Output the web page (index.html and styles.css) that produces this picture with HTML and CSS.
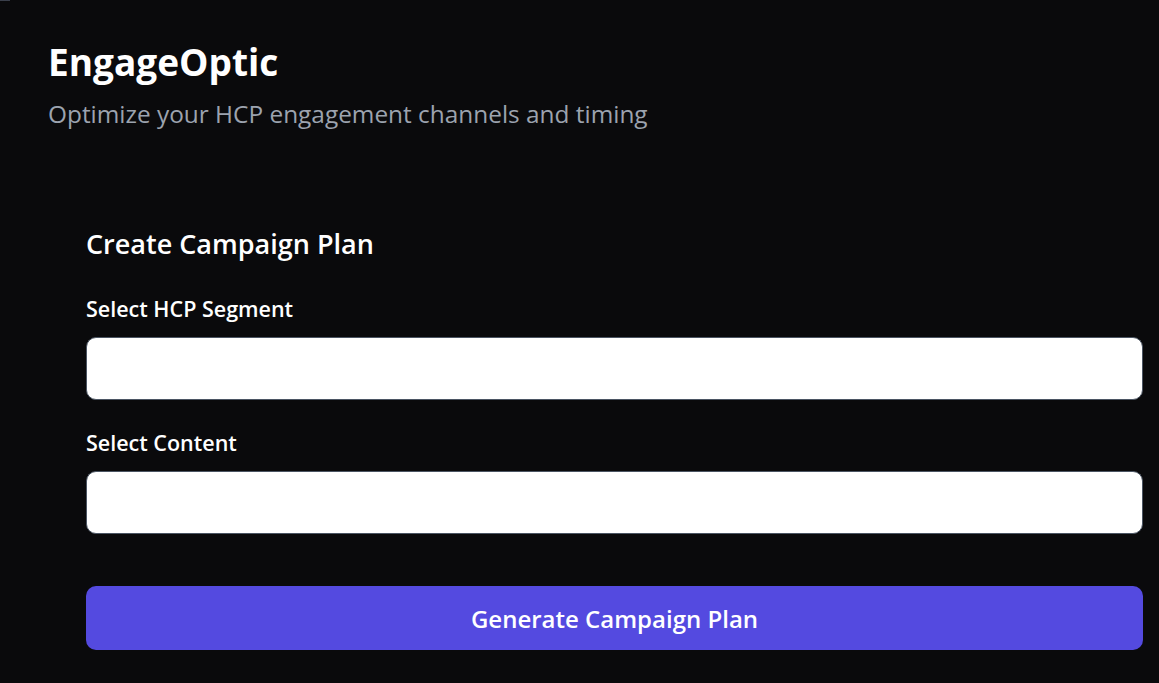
FILE: index.html
```html
<!DOCTYPE html>
<html lang="en">
<head>
<meta charset="utf-8">
<title>EngageOptic</title>
<link rel="stylesheet" href="styles.css">
</head>
<body>
<div class="corner"></div>
<main class="page">
  <header class="header">
    <h1 class="title">EngageOptic</h1>
    <p class="subtitle">Optimize your HCP engagement channels and timing</p>
  </header>
  <section class="card">
    <h2 class="card-title">Create Campaign Plan</h2>
    <div class="field">
      <label class="label" for="seg">Select HCP Segment</label>
      <div class="select" id="seg"></div>
    </div>
    <div class="field">
      <label class="label" for="content">Select Content</label>
      <div class="select" id="content"></div>
    </div>
    <button class="btn" type="button">Generate Campaign Plan</button>
  </section>
</main>
</body>
</html>
```
FILE: styles.css
```css
* { box-sizing: border-box; }
html, body { margin: 0; padding: 0; }
body {
  background: #0a0a0c;
  color: #ffffff;
  font-family: "Open Sans", "Noto Sans", sans-serif;
  width: 1159px;
  height: 683px;
  overflow: hidden;
  position: relative;
}
.corner {
  position: absolute;
  left: 0; top: 0;
  width: 10px; height: 1px;
  background: #3a3f4b;
}
.page {
  padding: 38px 16px 0 48px;
}
.header { margin: 0; }
.title {
  margin: 0;
  font-size: 37px;
  font-weight: 700;
  line-height: 48px;
}
.subtitle {
  margin: 12px 0 0;
  font-size: 24.4px;
  line-height: 32px;
  color: #9ca3af;
}
.card {
  margin: 96px 0 0 38px;
  display: flex;
  flex-direction: column;
}
.card-title {
  margin: 0;
  font-size: 27px;
  font-weight: 600;
  line-height: 36px;
}
.field {
  display: flex;
  flex-direction: column;
  margin-top: 33px;
}
.field + .field { margin-top: 29px; }
.label {
  font-size: 21.5px;
  font-weight: 600;
  line-height: 28px;
  margin-bottom: 14px;
}
.select {
  height: 63px;
  background: #ffffff;
  border: 1px solid #4b5563;
  border-radius: 10px;
}
.btn {
  margin-top: 52px;
  height: 64px;
  border: none;
  border-radius: 10px;
  background: #544ae0;
  color: #ffffff;
  font-family: inherit;
  font-size: 24px;
  font-weight: 600;
  width: 100%;
  padding: 0;
}
```
